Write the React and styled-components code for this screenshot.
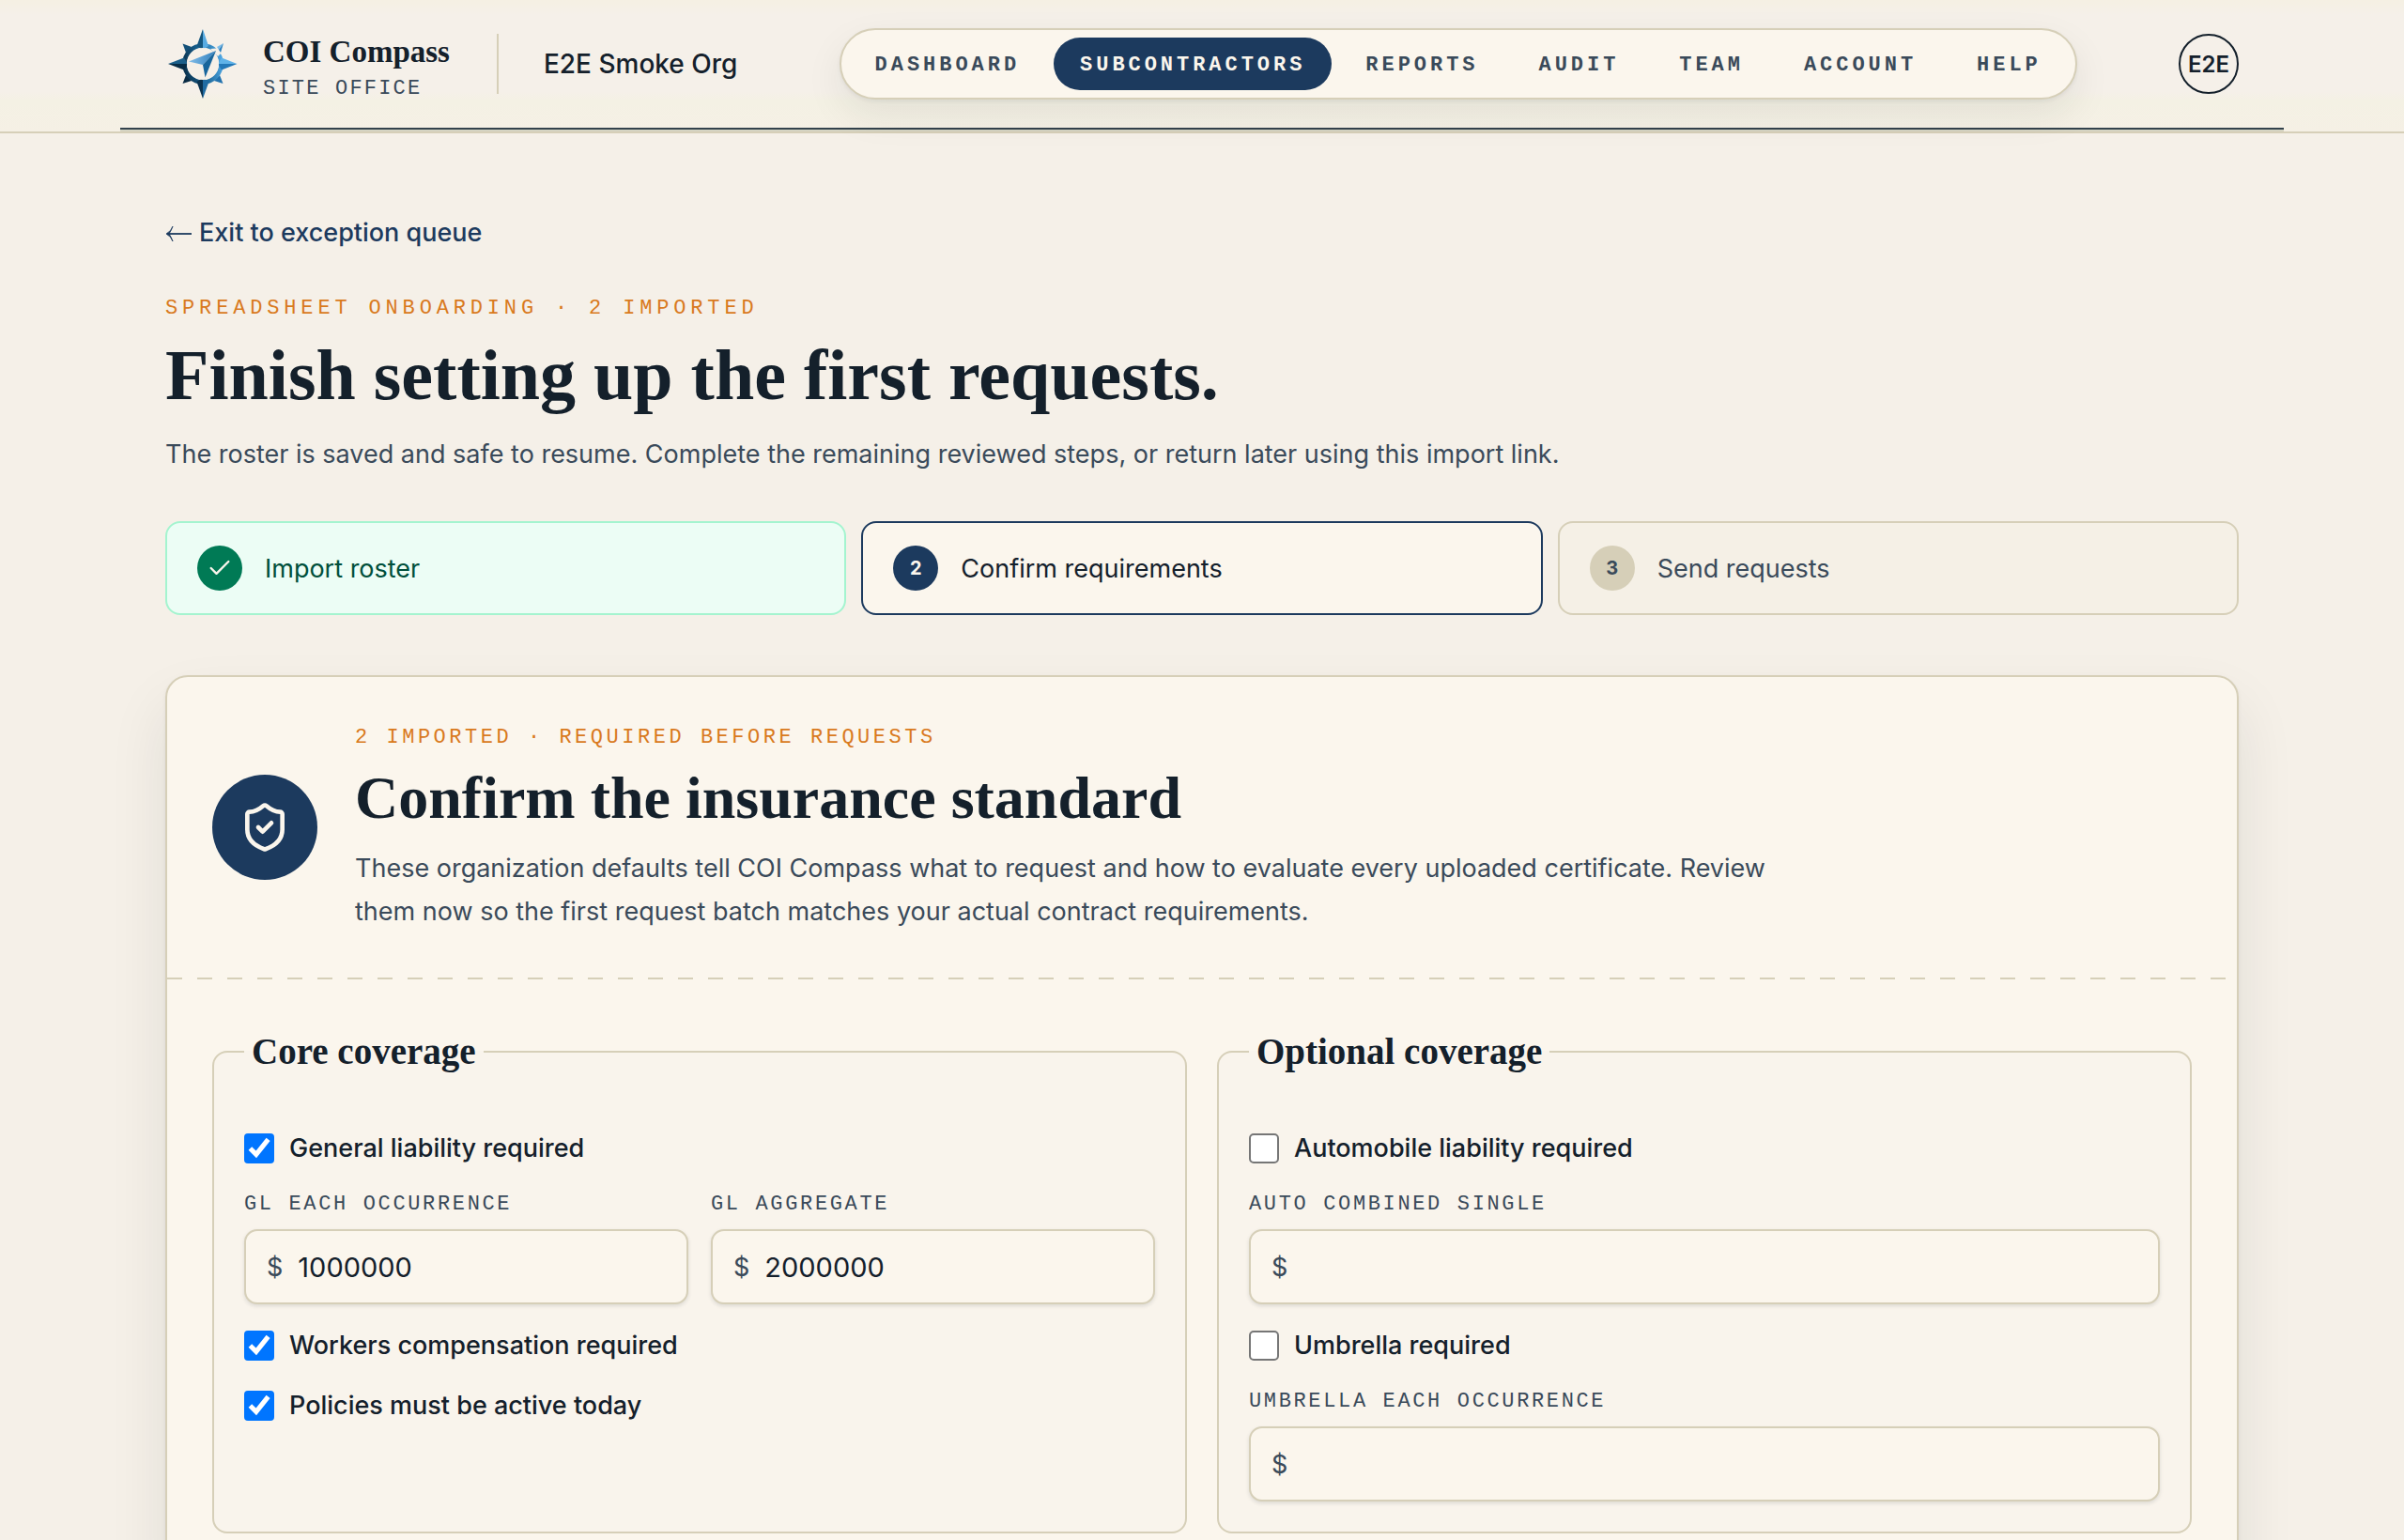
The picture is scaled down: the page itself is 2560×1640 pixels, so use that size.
import React, { useState } from 'react';
import styled, { createGlobalStyle, css } from 'styled-components';
import { Check, ShieldCheck } from 'lucide-react';

const colors = {
  paper: '#f5f0e8',
  card: '#fbf6ed',
  panel: '#f9f4ec',
  line: '#d6cfb8',
  ink: '#14202b',
  slate: '#3a4a5a',
  navy: '#1c3a5e',
  orange: '#d97a1e',
};

const sans = "Inter, 'Liberation Sans', sans-serif";
const serif = "'Liberation Serif', serif";
const mono = "'Liberation Mono', monospace";

const GlobalStyle = createGlobalStyle`
  * {
    box-sizing: border-box;
  }
  body {
    margin: 0;
    background: ${colors.paper};
    color: ${colors.ink};
    font-family: ${sans};
    font-size: 27px;
  }
  h1, h2, p, ol {
    margin: 0;
    padding: 0;
  }
`;

const Page = styled.div`
  height: 100vh;
  overflow: hidden;
`;

const Header = styled.header`
  border-bottom: 2px solid ${colors.line};
  background: linear-gradient(
    #f5f0e3 0,
    #f5f0e9 16px,
    #f5f0e9 98px,
    #f4f1e4 108px,
    #f5f0e5 140px
  );
`;

const HeaderInner = styled.div`
  max-width: 2304px;
  margin: 0 auto 2px;
  padding: 30px 48px;
  display: flex;
  align-items: center;
  justify-content: space-between;
  border-bottom: 2px solid #33424c;
  box-shadow: 0 2px 0 #d5d4c3;
`;

const Brand = styled.div`
  display: flex;
  align-items: center;
`;

const BrandLink = styled.a`
  display: flex;
  align-items: center;
  gap: 24px;
  height: 64px;
  color: inherit;
  text-decoration: none;
`;

const BrandText = styled.div`
  padding-top: 14px;
`;

const BrandName = styled.div`
  font-family: ${serif};
  font-size: 33px;
  font-weight: 700;
  line-height: 40px;
`;

const BrandSub = styled.div`
  font-family: ${mono};
  font-size: 22px;
  line-height: 40px;
  letter-spacing: 0.1em;
  color: ${colors.slate};
  text-transform: uppercase;
`;

const OrgName = styled.div`
  margin-left: 50px;
  padding-left: 48px;
  border-left: 2px solid ${colors.line};
  font-size: 28px;
  line-height: 64px;
  font-weight: 500;
`;

const Nav = styled.nav`
  display: flex;
  gap: 8px;
  padding: 8px;
  border: 2px solid ${colors.line};
  border-radius: 38px;
  background: ${colors.card};
  box-shadow: 0 2px 4px rgba(20, 32, 43, 0.06),
    0 16px 40px rgba(20, 32, 43, 0.08);
`;

const NavLink = styled.a`
  padding: 3px 28px 0;
  border-radius: 28px;
  font-family: ${mono};
  font-size: 22px;
  font-weight: 700;
  line-height: 53px;
  letter-spacing: 0.18em;
  text-transform: uppercase;
  text-decoration: none;
  color: ${(props) => (props.$active ? colors.card : colors.slate)};
  background: ${(props) => (props.$active ? colors.navy : 'transparent')};
`;

const Avatar = styled.button`
  width: 64px;
  height: 64px;
  padding: 0;
  border: 2px solid ${colors.ink};
  border-radius: 50%;
  background: transparent;
  color: ${colors.ink};
  font-family: ${sans};
  font-size: 24px;
  font-weight: 600;
`;

const Main = styled.main`
  max-width: 2304px;
  margin: 0 auto;
  padding: 86px 48px 96px;
`;

const BackLink = styled.a`
  display: inline-flex;
  align-items: center;
  gap: 8px;
  line-height: 40px;
  font-weight: 500;
  color: ${colors.navy};
  text-decoration: none;
`;

const Eyebrow = styled.p`
  padding-top: 2px;
  font-family: ${mono};
  font-size: 22px;
  line-height: 32px;
  letter-spacing: ${(props) => (props.$wide ? '0.22em' : '0.16em')};
  text-transform: uppercase;
  color: ${colors.orange};
`;

const Intro = styled.section`
  margin-top: 42px;
`;

const Title = styled.h1`
  margin-top: 14px;
  font-family: ${serif};
  font-size: 76px;
  font-weight: 700;
  line-height: 80px;
`;

const Lead = styled.p`
  margin-top: 22px;
  line-height: 46px;
  color: ${colors.slate};
`;

const Steps = styled.ol`
  margin-top: 48px;
  display: grid;
  grid-template-columns: repeat(3, 1fr);
  gap: 16px;
  list-style: none;
`;

const stepStyles = {
  done: css`
    border-color: #a4f4cf;
    background: #ecfdf5;
    color: #004f3b;
  `,
  current: css`
    border-color: ${colors.navy};
    background: ${colors.card};
    color: ${colors.ink};
  `,
  next: css`
    border-color: ${colors.line};
    background: #f5f0e6;
    color: ${colors.slate};
  `,
};

const Step = styled.li`
  display: flex;
  align-items: center;
  gap: 24px;
  height: 100px;
  padding: 0 32px;
  border: 2px solid;
  border-radius: 16px;
  ${(props) => stepStyles[props.$state]}
`;

const badgeColors = {
  done: '#007a55',
  current: colors.navy,
  next: colors.line,
};

const StepBadge = styled.span`
  display: flex;
  align-items: center;
  justify-content: center;
  width: 48px;
  height: 48px;
  border-radius: 50%;
  font-size: 20px;
  font-weight: 700;
  background: ${(props) => badgeColors[props.$state]};
  color: ${(props) => (props.$state === 'next' ? colors.slate : colors.card)};
`;

const Card = styled.section`
  margin-top: 64px;
  border: 2px solid ${colors.line};
  border-radius: 24px;
  background: ${colors.card};
  box-shadow: 0 2px 4px rgba(20, 32, 43, 0.06),
    0 32px 64px rgba(20, 32, 43, 0.09);
`;

const CardHeader = styled.div`
  display: flex;
  align-items: center;
  gap: 40px;
  padding: 48px;
  height: 320px;
`;

const CardIcon = styled.div`
  flex: none;
  display: flex;
  align-items: center;
  justify-content: center;
  width: 112px;
  height: 112px;
  border-radius: 50%;
  background: ${colors.navy};
  color: ${colors.card};
`;

const CardTitle = styled.h2`
  margin-top: 12px;
  font-family: ${serif};
  font-size: 64px;
  font-weight: 700;
  line-height: 72px;
`;

const CardText = styled.p`
  max-width: 1536px;
  margin-top: 16px;
  line-height: 46px;
  color: ${colors.slate};
`;

const DashedRule = styled.div`
  height: 2px;
  background: repeating-linear-gradient(
    90deg,
    ${colors.line} 0 16px,
    transparent 16px 32px
  );
`;

const CardBody = styled.form`
  display: grid;
  grid-template-columns: 1fr 1fr;
  gap: 32px;
  padding: 48px;
`;

const Fieldset = styled.fieldset`
  min-width: 0;
  margin: 0;
  padding: 54px 32px 32px;
  border: 2px solid ${colors.line};
  border-radius: 16px;
  background: ${colors.panel};
`;

const Legend = styled.legend`
  padding: 0 8px;
  font-family: ${serif};
  font-size: 39px;
  font-weight: 700;
  line-height: 58px;
`;

const FieldStack = styled.div`
  display: grid;
  gap: 24px;
`;

const FieldRow = styled.div`
  display: grid;
  grid-template-columns: repeat(2, minmax(0, 1fr));
  gap: 24px;
`;

const CheckLabel = styled.label`
  display: flex;
  align-items: center;
  gap: 16px;
  line-height: 40px;
  font-weight: 500;
`;

const CheckInput = styled.input`
  width: 16px;
  height: 16px;
  margin: 0;
  zoom: 2;
`;

const FieldLabel = styled.label`
  display: block;
  margin-bottom: 12px;
  padding-top: 2px;
  font-family: ${mono};
  font-size: 22px;
  line-height: 28px;
  letter-spacing: 0.12em;
  text-transform: uppercase;
  color: ${colors.slate};
`;

const MoneyBox = styled.div`
  display: flex;
  align-items: center;
  gap: 16px;
  height: 80px;
  padding: 0 22px;
  border: 2px solid ${colors.line};
  border-radius: 14px;
  background: ${colors.card};
  color: ${colors.slate};
  box-shadow: 0 2px 4px rgba(20, 32, 43, 0.12);
`;

const MoneyInput = styled.input`
  flex: 1;
  min-width: 0;
  padding: 0;
  border: 0;
  outline: 0;
  background: transparent;
  color: ${colors.ink};
  font-family: ${sans};
  font-size: 29px;
`;

function CompassLogo() {
  return (
    <svg width="80" height="80" viewBox="6 4 80 80" aria-hidden="true">
      <defs>
        <linearGradient id="ring" x1="0" y1="0.6" x2="1" y2="0.4">
          <stop offset="0" stopColor="#0b3552" />
          <stop offset="0.45" stopColor="#17608f" />
          <stop offset="1" stopColor="#4ba3df" />
        </linearGradient>
        <linearGradient id="needle" x1="0" y1="0" x2="1" y2="0">
          <stop offset="0" stopColor="#82bde8" />
          <stop offset="1" stopColor="#2f7fbd" />
        </linearGradient>
      </defs>
      <path d="M24.5 22.5 L34 26 L28 32 Z" fill="#135078" />
      <path d="M24.5 65 L28 56 L34 62 Z" fill="#0a2c45" />
      <path d="M67.5 65 L58 62 L64 56 Z" fill="#2272ae" />
      <circle cx="46" cy="44" r="19.5" fill="none" stroke="url(#ring)" strokeWidth="4.6" />
      <path d="M46 7 L39.5 25 L46 29 Z" fill="#15567f" />
      <path d="M46 7 L52 25 L46 29 Z" fill="#58abe2" />
      <path d="M82.5 44 L66 37.5 L62 44 Z" fill="#5fb2e8" />
      <path d="M82.5 44 L66 50.5 L62 44 Z" fill="#2378b8" />
      <path d="M46 81 L39.5 63 L46 59 Z" fill="#0b3350" />
      <path d="M46 81 L52.5 63 L46 59 Z" fill="#206ca3" />
      <path d="M9 44 L26 37.5 L30 44 Z" fill="#1b5f8a" />
      <path d="M9 44 L26 50.5 L30 44 Z" fill="#072c45" />
      <circle cx="46" cy="44" r="17" fill="#f5f0e8" />
      <path d="M54 28 L60 27.5 L67 24 L65 33 L62 36 Z" fill="#f5f0e8" />
      <path d="M68 22 L61 26 L63 29 Z" fill="#7cbdea" />
      <path d="M68 22 L63 29 L65 32 Z" fill="#2a80bf" />
      <path d="M60 30 L31 41.5 L46 45 Z" fill="url(#needle)" />
      <path d="M60 30 L46 45 L48.5 58.5 Z" fill="#17659c" />
    </svg>
  );
}

function BackArrow() {
  return (
    <svg width="28" height="28" viewBox="0 0 28 28" fill="none" aria-hidden="true">
      <path d="M2 15 H28" stroke="currentColor" strokeWidth="1.8" />
      <path d="M8 7 Q6 12.500 1 15 Q6 17.500 8 23 Q6.500 18.500 4 15 Q6.500 11.500 8 7 Z" fill="currentColor" stroke="currentColor" strokeWidth="0.8" />
    </svg>
  );
}

function CheckField({ label, defaultChecked }) {
  const [checked, setChecked] = useState(Boolean(defaultChecked));

  return (
    <CheckLabel>
      <CheckInput
        type="checkbox"
        checked={checked}
        onChange={(e) => setChecked(e.target.checked)}
      />
      {label}
    </CheckLabel>
  );
}

function MoneyField({ id, label, initial = '' }) {
  const [value, setValue] = useState(initial);

  return (
    <div>
      <FieldLabel htmlFor={id}>{label}</FieldLabel>
      <MoneyBox>
        <span>$</span>
        <MoneyInput
          id={id}
          inputMode="numeric"
          value={value}
          onChange={(e) => setValue(e.target.value)}
        />
      </MoneyBox>
    </div>
  );
}

const navItems = [
  'Dashboard',
  'Subcontractors',
  'Reports',
  'Audit',
  'Team',
  'Account',
  'Help',
];

const steps = [
  { label: 'Import roster', state: 'done' },
  { label: 'Confirm requirements', state: 'current' },
  { label: 'Send requests', state: 'next' },
];

export default function App() {
  return (
    <Page>
      <GlobalStyle />
      <Header>
        <HeaderInner>
          <Brand>
            <BrandLink href="#home">
              <CompassLogo />
              <BrandText>
                <BrandName>COI Compass</BrandName>
                <BrandSub>Site Office</BrandSub>
              </BrandText>
            </BrandLink>
            <OrgName>E2E Smoke Org</OrgName>
          </Brand>
          <Nav>
            {navItems.map((item) => (
              <NavLink
                key={item}
                href={`#${item.toLowerCase()}`}
                $active={item === 'Subcontractors'}
              >
                {item}
              </NavLink>
            ))}
          </Nav>
          <Avatar type="button">E2E</Avatar>
        </HeaderInner>
      </Header>

      <Main>
        <BackLink href="#queue">
          <BackArrow />
          Exit to exception queue
        </BackLink>
        <Intro>
          <Eyebrow $wide>Spreadsheet onboarding · 2 imported</Eyebrow>
          <Title>Finish setting up the first requests.</Title>
          <Lead>
            The roster is saved and safe to resume. Complete the remaining
            reviewed steps, or return later using this import link.
          </Lead>
        </Intro>

        <Steps>
          {steps.map((step, index) => (
            <Step key={step.label} $state={step.state}>
              <StepBadge $state={step.state}>
                {step.state === 'done' ? (
                  <Check size={28} strokeWidth={2} />
                ) : (
                  index + 1
                )}
              </StepBadge>
              {step.label}
            </Step>
          ))}
        </Steps>

        <Card>
          <CardHeader>
            <CardIcon>
              <ShieldCheck size={56} strokeWidth={2} />
            </CardIcon>
            <div>
              <Eyebrow>2 imported · Required before requests</Eyebrow>
              <CardTitle>Confirm the insurance standard</CardTitle>
              <CardText>
                These organization defaults tell COI Compass what to request and
                how to evaluate every uploaded certificate. Review them now so
                the first request batch matches your actual contract
                requirements.
              </CardText>
            </div>
          </CardHeader>
          <DashedRule />
          <CardBody>
            <Fieldset>
              <Legend>Core coverage</Legend>
              <FieldStack>
                <CheckField label="General liability required" defaultChecked />
                <FieldRow>
                  <MoneyField
                    id="gl-each"
                    label="GL each occurrence"
                    initial="1000000"
                  />
                  <MoneyField
                    id="gl-aggregate"
                    label="GL aggregate"
                    initial="2000000"
                  />
                </FieldRow>
                <CheckField
                  label="Workers compensation required"
                  defaultChecked
                />
                <CheckField label="Policies must be active today" defaultChecked />
              </FieldStack>
            </Fieldset>
            <Fieldset>
              <Legend>Optional coverage</Legend>
              <FieldStack>
                <CheckField label="Automobile liability required" />
                <MoneyField id="auto-single" label="Auto combined single" />
                <CheckField label="Umbrella required" />
                <MoneyField id="umbrella-each" label="Umbrella each occurrence" />
              </FieldStack>
            </Fieldset>
          </CardBody>
        </Card>
      </Main>
    </Page>
  );
}
